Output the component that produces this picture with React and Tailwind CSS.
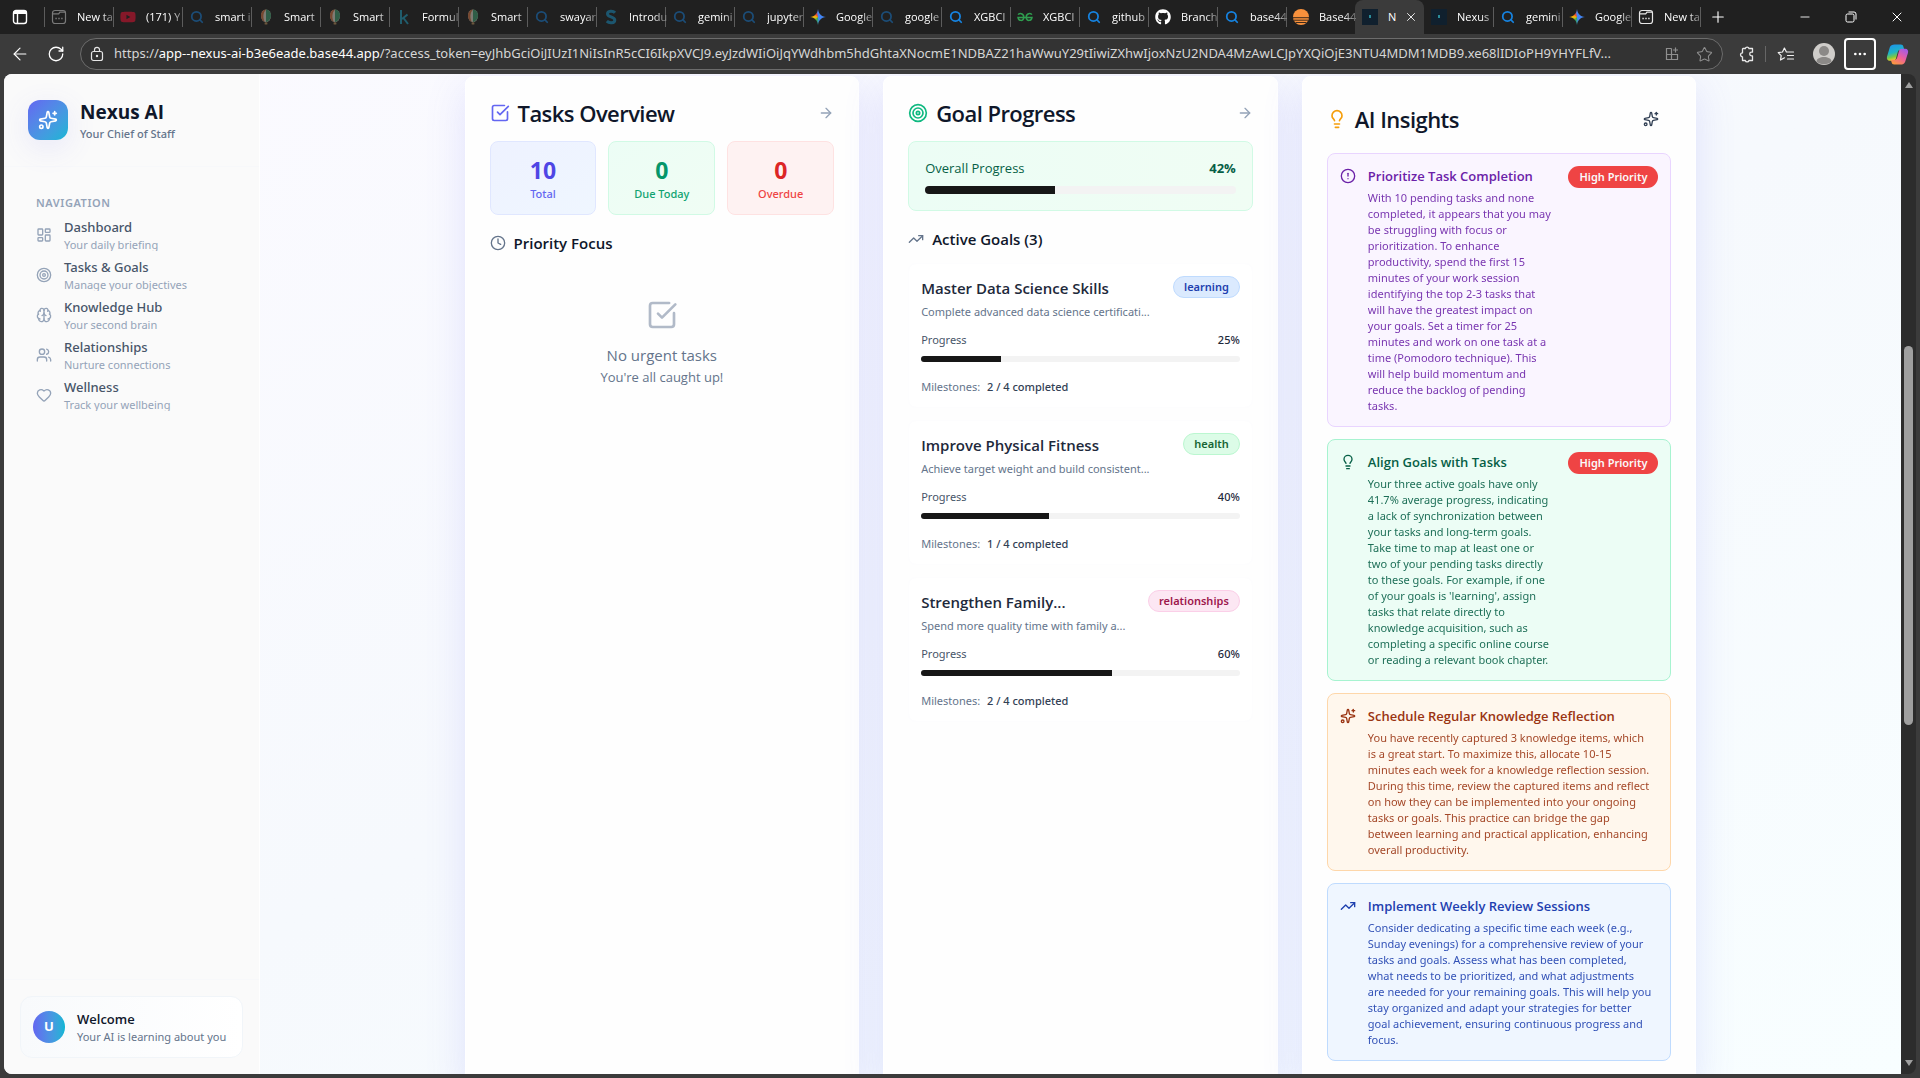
import React from "react";
import {
  ArrowLeft,
  ArrowRight,
  Brain,
  CircleAlert,
  Clock,
  Ellipsis,
  Heart,
  LayoutDashboard,
  Lightbulb,
  Minus,
  Plus,
  RotateCw,
  Search,
  Sparkles,
  SquareCheckBig,
  Star,
  Target,
  TrendingUp,
  Users,
  X,
} from "lucide-react";
import { FaGithub, FaYoutube } from "react-icons/fa";

/* Shared style of the small texts. */
const XS = "font-['Noto_Sans',sans-serif] text-[11px] ";

/* ---------- favicons ---------- */

const SearchIcon = () => <Search className="size-4 text-[#1683e0] p-px" strokeWidth={3} />;

const NewTabIcon = () => (
  <svg viewBox="0 0 16 16" className="size-4" fill="none" stroke="#e8e8e8" strokeWidth="1.2">
    <rect x="1.5" y="1.5" width="13" height="13" rx="2.5" />
    <path d="M1.5 4.8h6.2l1.2-1.6h5.4" />
    <path d="M4.4 9.5h1.4M7.3 9.5h1.4M10.2 9.5h1.4" strokeWidth="1.5" />
  </svg>
);

const BalloonIcon = () => (
  <svg viewBox="0 0 16 16" className="size-4">
    <ellipse cx="8" cy="6.8" rx="5" ry="6.3" fill="#f0e9d8" />
    <path d="M8 .5C5.200 .5 3 3.300 3 6.800c0 3 1.800 5.500 3.800 6.200C4.800 9 4.800 4 8 .5Z" fill="#e07a45" />
    <path d="M8 .5c2.800 0 5 2.800 5 6.300 0 3-2.200 5.500-5 6.300Z" fill="#43a877" />
    <rect x="6.600" y="13.300" width="2.800" height="2.200" rx=".6" fill="#c79a62" />
  </svg>
);

const KIcon = () => (
  <svg viewBox="0 0 16 16" className="size-4" fill="none" stroke="#20a5c9" strokeWidth="2">
    <path d="M5 1v14M11.500 5.500 6 10M7.500 9l4.500 6" />
  </svg>
);

const SIcon = () => (
  <svg viewBox="0 0 16 16" className="size-4" fill="none" stroke="#1899cf" strokeWidth="3">
    <path d="M12 3.800C10 1.500 4.500 1.600 4.500 4.900c0 3.400 7.300 2.400 7.300 6 0 3.500-5.600 3.600-8 1.300" />
  </svg>
);

const GeminiIcon = () => (
  <div className="size-4 bg-[conic-gradient(#4285f4_0deg_160deg,#34a853_200deg,#fbbc05_270deg,#ea4335_330deg,#4285f4_360deg)] [clip-path:path('M8_0C8.600_4.800_11.200_7.400_16_8C11.200_8.600_8.600_11.200_8_16C7.400_11.200_4.800_8.600_0_8C4.800_7.400_7.400_4.800_8_0Z')]" />
);

const GeeksIcon = () => (
  <svg viewBox="0 0 16 16" className="size-4" fill="none" stroke="#2f9e4f" strokeWidth="1.500">
    <path d="M1.200 5.800C2 4 6.800 4 6.800 8.200c0 4.400-5.400 4-5.800.2h14c-.4 3.800-5.800 4.200-5.800-.2C9.200 4 14 4 14.800 5.800" />
  </svg>
);

const BaseIcon = () => (
  <svg viewBox="0 0 16 16" className="size-4">
    <circle cx="8" cy="8" r="8" fill="#f9913c" />
    <path d="M0 8.700h16M1 11.200h14M2.500 13.500h11" stroke="#2a2018" strokeWidth=".9" />
  </svg>
);

const NexusIcon = () => (
  <svg viewBox="0 0 16 16" className="size-4">
    <rect width="16" height="16" fill="#10202e" />
    <path d="M7 6h2v3H7z" fill="#2b8c99" />
  </svg>
);

const YoutubeIcon = () => <FaYoutube className="size-4 text-[#ff1036]" />;
const GithubIcon = () => <FaGithub className="size-4 text-white" />;

const TABS = [
  [NewTabIcon, "New ta", true],
  [YoutubeIcon, "(171) Y", true],
  [SearchIcon, "smart i", true],
  [BalloonIcon, "Smart", true],
  [BalloonIcon, "Smart", true],
  [KIcon, "Formul", true],
  [BalloonIcon, "Smart", true],
  [SearchIcon, "swayar", true],
  [SIcon, "Introdu", true],
  [SearchIcon, "gemini", true],
  [SearchIcon, "jupyter", true],
  [GeminiIcon, "Google", false],
  [SearchIcon, "google", true],
  [SearchIcon, "XGBCl", false],
  [GeeksIcon, "XGBCl", false],
  [SearchIcon, "github", false],
  [GithubIcon, "Branch", false],
  [SearchIcon, "base44", false],
  [BaseIcon, "Base44", false],
  [NexusIcon, "N", false],
  [NexusIcon, "Nexus", false],
  [SearchIcon, "gemini", false],
  [GeminiIcon, "Google", false],
  [NewTabIcon, "New ta", false],
];
const ACTIVE_TAB = 19;

function Tab({ icon: Icon, title, dim, active, bordered }) {
  if (active) {
    return (
      <div className="flex h-full w-[69px] items-center rounded-t-lg bg-[#3b3b3b] pl-[7px]">
        <button className="flex items-center gap-[10px]" aria-label="Nexus AI tab">
          <Icon />
          <span>{title}</span>
        </button>
        <button className="ml-2" aria-label="Close tab">
          <X className="size-[14px]" strokeWidth={1.5} />
        </button>
      </div>
    );
  }
  return (
    <div className="flex h-full w-[69px] items-center">
      <div className={bordered ? "h-5 w-px bg-[#5c5c5c]" : "h-5 w-px"} />
      <button className="flex min-w-0 flex-1 items-center gap-[10px] pl-[6px]">
        <span className={dim ? "opacity-45" : ""}>
          <Icon />
        </span>
        <span className="whitespace-nowrap text-left [mask-image:linear-gradient(to_right,black_24px,transparent_42px)]">
          {title}
        </span>
      </button>
    </div>
  );
}

function TabStrip() {
  return (
    <div className="flex h-[34px] shrink-0 items-stretch bg-[#202020] font-['Open_Sans',sans-serif] text-[11px] text-white">
      <button className="flex w-[44px] items-center pl-3" aria-label="Tab actions">
        <svg viewBox="0 0 16 16" className="size-4" fill="none" stroke="white" strokeWidth="1.4">
          <rect x="1.500" y="1.500" width="13" height="13" rx="2.500" />
          <path d="M1.500 3.500h13" strokeWidth="3" />
          <path d="M5.500 3v11" />
        </svg>
      </button>
      {TABS.map(([icon, title, dim], i) => (
        <Tab
          key={i}
          icon={icon}
          title={title}
          dim={dim}
          active={i === ACTIVE_TAB}
          bordered={i !== ACTIVE_TAB + 1}
        />
      ))}
      <div className="my-auto h-5 w-px bg-[#5c5c5c]" />
      <button className="flex w-[34px] items-center justify-center" aria-label="New tab">
        <Plus className="size-[18px]" strokeWidth={1.5} />
      </button>
      <div className="ml-auto flex">
        <button className="flex w-[46px] items-center justify-center" aria-label="Minimize">
          <Minus className="size-[14px]" strokeWidth={1.5} />
        </button>
        <button className="flex w-[46px] items-center justify-center" aria-label="Restore">
          <svg viewBox="0 0 12 12" className="size-3" fill="none" stroke="white">
            <rect x="1" y="3" width="8" height="8" rx="1.500" />
            <path d="M3.500 1h5.500a2 2 0 0 1 2 2v5.500" />
          </svg>
        </button>
        <button className="flex w-[46px] items-center justify-center" aria-label="Close">
          <X className="size-[16px]" strokeWidth={1.5} />
        </button>
      </div>
    </div>
  );
}

const URL_TEXT =
  "/?access_token=eyJhbGciOiJIUzI1NiIsInR5cCI6IkpXVCJ9.eyJzdWIiOiJqYWdhbm5hdGhtaXNocmE1NDBAZ21haWwuY29tIiwiZXhwIjoxNzU2NDA4MzAwLCJpYXQiOjE3NTU4MDM1MDB9.xe68lIDIoPH9YHYFLfV...";

const CopilotIcon = () => (
  <svg viewBox="0 0 24 24" className="size-[23px]">
    <defs>
      <linearGradient id="cpA" x1="0" y1="0" x2="0.300" y2="1">
        <stop offset="0" stopColor="#1d8ff0" />
        <stop offset="0.550" stopColor="#1fb5c4" />
        <stop offset="0.800" stopColor="#7cc843" />
        <stop offset="1" stopColor="#f5d327" />
      </linearGradient>
      <linearGradient id="cpB" x1="0.800" y1="0" x2="0.200" y2="1">
        <stop offset="0" stopColor="#a05be8" />
        <stop offset="0.500" stopColor="#ee5f9c" />
        <stop offset="1" stopColor="#fb9a3a" />
      </linearGradient>
    </defs>
    <path d="M9 1.500h6.500c1.500 0 2.200.8 2.700 2.300L19 7h-3.500c-1.800 0-2.700.8-3.200 2.500L10.500 16c-.5 1.700-1.400 2.500-3 2.500H4c-2.500 0-3.600-2-2.900-4.500L4 4.500C4.700 2.500 6.500 1.500 9 1.500Z" fill="url(#cpA)" />
    <path d="M15 22.500H8.500c-1.500 0-2.200-.8-2.700-2.300L5 17.500h3.500c1.800 0 2.700-.8 3.200-2.500l1.800-6.500c.5-1.700 1.400-2.500 3-2.500H20c2.500 0 3.600 2 2.900 4.500L20 19.500c-.7 2-2.500 3-5 3Z" fill="url(#cpB)" />
  </svg>
);

function Toolbar() {
  return (
    <div className="flex h-10 shrink-0 items-center bg-[#3b3b3b] text-white">
      <button className="flex w-10 justify-center" aria-label="Back">
        <ArrowLeft className="size-5" strokeWidth={1.4} />
      </button>
      <button className="flex w-8 justify-center" aria-label="Reload">
        <RotateCw className="size-[18px]" strokeWidth={1.7} />
      </button>
      <div className="ml-2 flex h-8 min-w-0 flex-1 items-center rounded-full border border-[#6c6c6c] bg-[#333333] pr-[2px] pl-2">
        <svg viewBox="0 0 16 16" className="size-4 shrink-0" fill="none" stroke="#e5e5e5" strokeWidth="1.200">
          <rect x="2.500" y="5.500" width="11" height="9" rx="2" />
          <path d="M5.500 5.500V3.800a2.500 2.500 0 0 1 5 0v1.700" />
          <circle cx="8" cy="10" r=".6" fill="#e5e5e5" />
        </svg>
        <p className="ml-[9px] min-w-0 flex-1 whitespace-nowrap font-['Noto_Sans',sans-serif] text-[13px] text-[#d6d6d6]">
          https://<span className="text-white">app--nexus-ai-b3e6eade.base44.app</span>
          {URL_TEXT}
        </p>
        <button className="flex w-8 shrink-0 justify-center" aria-label="Install app">
          <svg viewBox="0 0 16 16" className="size-4" fill="none" stroke="#8f8f8f" strokeWidth="1.200">
            <path d="M7.500 2.500h-5v11h11v-5h-11M7.500 2.500v11M11.500 1.500v5M9 4h5" />
          </svg>
        </button>
        <button className="flex w-8 shrink-0 justify-center text-[#8f8f8f]" aria-label="Add to favorites">
          <Star className="size-[17px]" strokeWidth={1.5} />
        </button>
      </div>
      <button className="ml-[6px] flex w-9 justify-center" aria-label="Extensions">
        <svg viewBox="0 0 18 18" className="size-[18px]" fill="none" stroke="#e8e8e8" strokeWidth="1.300" strokeLinejoin="round">
          <path d="M5 3.500h2.300a1.900 1.900 0 0 1 3.700 0h3.500v3.700h-1a1.800 1.800 0 0 0 0 3.600h1v4.700h-3.500a1.900 1.900 0 0 1-3.700 0H4.500v-3.700a1.900 1.900 0 0 1 0-3.900V4Z" />
        </svg>
      </button>
      <div className="h-4 w-px bg-[#666666]" />
      <button className="flex w-10 justify-center" aria-label="Favorites">
        <svg viewBox="0 0 18 18" className="size-[18px]" fill="none" stroke="#f0f0f0" strokeWidth="1.200" strokeLinejoin="round" strokeLinecap="round">
          <path d="M7.500 12.800 3.500 15l.7-4.400-3-3 4.300-.6L7.400 3l2 4h7.100M10.500 10.500h6M10.500 14h6" />
        </svg>
      </button>
      <button className="mr-[2px] flex w-9 justify-center" aria-label="Profile">
        <svg viewBox="0 0 22 22" className="size-[22px]">
          <circle cx="11" cy="11" r="11" fill="#cfcdca" />
          <circle cx="11" cy="8" r="5" fill="#8b8987" />
          <path d="M3.500 18.500c0-6 15-6 15 0-3 3.600-12 3.600-15 0Z" fill="#8b8987" />
        </svg>
      </button>
      <button className="flex size-8 items-center justify-center rounded-sm border-2 border-white" aria-label="Settings and more">
        <Ellipsis className="size-4" strokeWidth={2} />
      </button>
      <button className="mr-[11px] ml-[9px] flex w-6 justify-center" aria-label="Copilot">
        <CopilotIcon />
      </button>
    </div>
  );
}

/* ---------- sidebar ---------- */

const NAV = [
  [LayoutDashboard, "Dashboard", "Your daily briefing"],
  [Target, "Tasks & Goals", "Manage your objectives"],
  [Brain, "Knowledge Hub", "Your second brain"],
  [Users, "Relationships", "Nurture connections"],
  [Heart, "Wellness", "Track your wellbeing"],
];

function Sidebar() {
  return (
    <aside className="flex w-64 shrink-0 flex-col border-r border-white bg-[#fafafa]">
      <header className="flex items-center gap-3 border-b border-[#f7f8fa] p-6">
        <div className="flex size-10 items-center justify-center rounded-xl bg-linear-to-br from-[#6366f1] to-[#06b6d4] shadow-[0_8px_30px_rgba(99,102,241,0.12)]">
          <Sparkles className="size-5 text-white" />
        </div>
        <div>
          <h1 className="text-[19px] leading-7 font-bold text-[#0f172a]">Nexus AI</h1>
          <p className={XS + "leading-4 font-medium text-[#64748b]"}>Your Chief of Staff</p>
        </div>
      </header>
      <nav className="flex-1 px-8 pt-6">
        <h2 className={XS + "mb-1 h-6 leading-6 font-semibold tracking-wider text-[#94a3b8]"}>NAVIGATION</h2>
        <ul className="flex flex-col gap-2">
          {NAV.map(([Icon, title, sub]) => (
            <li key={title}>
              <a href="#" className="flex h-8 items-center gap-3 overflow-hidden">
                <Icon className="size-4 shrink-0 text-[#94a3b8]" />
                <span className="flex flex-col">
                  <span className="font-['Noto_Sans',sans-serif] text-[13px] leading-5 font-medium text-[#475569]">{title}</span>
                  <span className={XS + "leading-4 text-[#94a3b8]"}>{sub}</span>
                </span>
              </a>
            </li>
          ))}
        </ul>
      </nav>
      <footer className="border-t border-[#f7f8fa] p-4">
        <div className="flex items-center gap-3 rounded-xl border border-[#f1f5f9] bg-linear-to-r from-[#f8fafc] to-white p-3">
          <div className="flex size-8 items-center justify-center rounded-full bg-linear-to-r from-[#6366f1] to-[#06b6d4] text-[13px] font-bold text-white">
            U
          </div>
          <div>
            <p className="text-[13px] leading-5 font-semibold text-[#0f172a]">Welcome</p>
            <p className={XS + "leading-4 text-[#64748b]"}>Your AI is learning about you</p>
          </div>
        </div>
      </footer>
    </aside>
  );
}

/* ---------- cards ---------- */

function Card({ children }) {
  return (
    <section className="rounded-lg border border-white bg-[#fefefe] p-6 shadow-[0_12px_40px_rgba(99,102,241,0.16)]">
      {children}
    </section>
  );
}

function CardHeader({ icon: Icon, iconClass, title }) {
  return (
    <div className="mb-4 flex h-6 items-center justify-between">
      <div className="flex items-center gap-2">
        <Icon className={iconClass} />
        <h2 className="text-[22px] leading-7 font-semibold tracking-tight text-[#0f172a]">{title}</h2>
      </div>
      <button aria-label={"Open " + title}>
        <ArrowRight className="size-4 text-[#94a3b8]" />
      </button>
    </div>
  );
}

const STATS = [
  ["10", "Total", "border-[#e0e7ff] bg-linear-to-br from-[#eef2ff] to-[#eff6ff] text-[#4f46e5]", "text-[#6366f1]"],
  ["0", "Due Today", "border-[#d1fae5] bg-linear-to-br from-[#ecfdf5] to-[#f0fdf4] text-[#059669]", "text-[#10a371]"],
  ["0", "Overdue", "border-[#fee2e2] bg-[#fef2f2] text-[#dc2626]", "text-[#ef4444]"],
];

function TasksCard() {
  return (
    <Card>
      <CardHeader icon={SquareCheckBig} iconClass="size-5 text-[#6366f1]" title="Tasks Overview" />
      <div className="grid grid-cols-3 gap-3">
        {STATS.map(([n, label, box, text]) => (
          <div key={label} className={"rounded-lg border p-3 text-center " + box}>
            <p className="text-[23px] leading-8 font-bold">{n}</p>
            <p className={XS + "leading-4 font-medium " + text}>{label}</p>
          </div>
        ))}
      </div>
      <h3 className="mt-4 flex items-center gap-2 text-[15px] leading-6 font-semibold text-[#0f172a]">
        <Clock className="size-4 text-[#64748b]" />
        Priority Focus
      </h3>
      <div className="flex flex-col items-center pt-11 text-[#64748b]">
        <SquareCheckBig className="mb-3 size-8 text-[#b1bac8]" />
        <p className="text-[15px] leading-6">No urgent tasks</p>
        <p className="text-[13px] leading-5">You're all caught up!</p>
      </div>
    </Card>
  );
}

const GOALS = [
  ["Master Data Science Skills", "learning", "border-[#bfdbfe] bg-[#dbeafe] text-[#1e40af]", "Complete advanced data science certificati...", 25, "2 / 4 completed"],
  ["Improve Physical Fitness", "health", "border-[#bbf7d0] bg-[#dcfce7] text-[#166534]", "Achieve target weight and build consistent...", 40, "1 / 4 completed"],
  ["Strengthen Family...", "relationships", "border-[#fbcfe8] bg-[#fce7f3] text-[#9d174d]", "Spend more quality time with family a...", 60, "2 / 4 completed"],
];

function Bar({ value, className }) {
  return (
    <div className={"overflow-hidden rounded-full bg-[#f3f3f3] " + className} role="progressbar" aria-valuenow={value}>
      <div className="h-full bg-[#171717]" style={{ width: value + "%" }} />
    </div>
  );
}

function GoalsCard() {
  return (
    <Card>
      <CardHeader icon={Target} iconClass="size-5 text-[#10b981]" title="Goal Progress" />
      <div className="rounded-lg border border-[#d1fae5] bg-linear-to-r from-[#ecfdf5] to-[#f0fdf4] p-4">
        <div className="mb-2 flex justify-between text-[13px] leading-5 text-[#065f46]">
          <span className="font-medium">Overall Progress</span>
          <span className="font-bold">42%</span>
        </div>
        <Bar value={41.7} className="h-2" />
      </div>
      <h3 className="mt-4 mb-3 flex items-center gap-2 text-[15px] leading-6 font-semibold text-[#0f172a]">
        <TrendingUp className="size-4 text-[#64748b]" />
        Active Goals (3)
      </h3>
      <div className="flex flex-col gap-3">
        {GOALS.map(([title, tag, tagClass, desc, pct, done]) => (
          <article key={title} className="rounded-lg border border-[#fdfdfe] bg-white p-3">
            <div className="flex items-start justify-between">
              <h4 className="text-[15px] leading-6 font-semibold text-[#1e293b]">{title}</h4>
              <span className={XS + "h-[22px] rounded-full border px-[10px] leading-5 font-semibold " + tagClass}>{tag}</span>
            </div>
            <p className={XS + "mt-1 leading-4 text-[#64748b]"}>{desc}</p>
            <div className={XS + "mt-3 mb-2 flex justify-between leading-4"}>
              <span className="text-[#475569]">Progress</span>
              <span className="font-medium text-[#1e293b]">{pct}%</span>
            </div>
            <Bar value={pct} className="h-[6px]" />
            <p className={XS + "border-t border-transparent pt-4 leading-4 text-[#64748b]"}>
              Milestones: <span className="ml-1 font-medium text-[#334155]">{done}</span>
            </p>
          </article>
        ))}
      </div>
    </Card>
  );
}

const INSIGHTS = [
  {
    icon: CircleAlert,
    title: "Prioritize Task Completion",
    tone: "border-[#e9d5ff] bg-[#faf5ff] text-[#6b21a8]",
    high: true,
    text: `With 10 pending tasks and none
completed, it appears that you may
be struggling with focus or
prioritization. To enhance
productivity, spend the first 15
minutes of your work session
identifying the top 2-3 tasks that
will have the greatest impact on
your goals. Set a timer for 25
minutes and work on one task at a
time (Pomodoro technique). This
will help build momentum and
reduce the backlog of pending
tasks.`,
  },
  {
    icon: Lightbulb,
    title: "Align Goals with Tasks",
    tone: "border-[#a7f3d0] bg-[#ecfdf5] text-[#065f46]",
    high: true,
    text: `Your three active goals have only
41.7% average progress, indicating
a lack of synchronization between
your tasks and long-term goals.
Take time to map at least one or
two of your pending tasks directly
to these goals. For example, if one
of your goals is 'learning', assign
tasks that relate directly to
knowledge acquisition, such as
completing a specific online course
or reading a relevant book chapter.`,
  },
  {
    icon: Sparkles,
    title: "Schedule Regular Knowledge Reflection",
    tone: "border-[#fed7aa] bg-[#fff7ed] text-[#9a3412]",
    text: `You have recently captured 3 knowledge items, which
is a great start. To maximize this, allocate 10-15
minutes each week for a knowledge reflection session.
During this time, review the captured items and reflect
on how they can be implemented into your ongoing
tasks or goals. This practice can bridge the gap
between learning and practical application, enhancing
overall productivity.`,
  },
  {
    icon: TrendingUp,
    title: "Implement Weekly Review Sessions",
    tone: "border-[#bfdbfe] bg-[#eff6ff] text-[#1e40af]",
    text: `Consider dedicating a specific time each week (e.g.,
Sunday evenings) for a comprehensive review of your
tasks and goals. Assess what has been completed,
what needs to be prioritized, and what adjustments
are needed for your remaining goals. This will help you
stay organized and adapt your strategies for better
goal achievement, ensuring continuous progress and
focus.`,
  },
];

function InsightsCard() {
  return (
    <Card>
      <div className="mb-4 flex h-9 items-center justify-between">
        <div className="flex items-center gap-2">
          <Lightbulb className="size-5 text-[#f59e0b]" />
          <h2 className="text-[22px] leading-7 font-semibold tracking-tight text-[#0f172a]">AI Insights</h2>
        </div>
        <button className="px-3" aria-label="Generate insights">
          <Sparkles className="size-4 text-[#334155]" />
        </button>
      </div>
      <div className="flex flex-col gap-3">
        {INSIGHTS.map(({ icon: Icon, title, tone, high, text }) => (
          <article key={title} className={"flex gap-3 rounded-lg border p-3 " + tone}>
            <Icon className="mt-[2px] size-4 shrink-0" />
            <div className="min-w-0 flex-1">
              <h3 className="text-[13px] leading-5 font-semibold whitespace-nowrap">{title}</h3>
              <p className={XS + "mt-1 leading-4 whitespace-pre opacity-90"}>{text}</p>
            </div>
            {high && (
              <span className={XS + "-ml-1 h-[22px] shrink-0 rounded-full bg-[#ef4444] px-[11px] leading-[22px] font-semibold text-[#fafafa]"}>
                High Priority
              </span>
            )}
          </article>
        ))}
      </div>
    </Card>
  );
}

function Scrollbar() {
  return (
    <div className="flex w-[15px] shrink-0 flex-col items-center rounded-r-lg bg-[#2c2c2c] py-2">
      <svg viewBox="0 0 8 6" className="h-[6px] w-2" fill="#9f9f9f"><path d="M4 0 8 6H0Z" /></svg>
      <div className="flex w-full flex-1 flex-col items-center">
        <div className="h-[26.5%]" />
        <div className="h-[39%] w-[9px] rounded-full bg-[#9f9f9f]" />
      </div>
      <svg viewBox="0 0 8 6" className="h-[6px] w-2" fill="#9f9f9f"><path d="M4 6 8 0H0Z" /></svg>
    </div>
  );
}

export default function App() {
  return (
    <div className="flex h-screen flex-col overflow-hidden bg-[#3b3b3b] font-['Open_Sans','Noto_Sans',sans-serif]">
      <TabStrip />
      <Toolbar />
      <div className="flex min-h-0 flex-1 px-1 pb-1">
        <div className="flex min-w-0 flex-1 overflow-hidden rounded-l-lg bg-linear-to-br from-[#fbfaff] via-[#f6f9fd] to-[#f8feff]">
          <Sidebar />
          <main className="min-w-0 flex-1 overflow-hidden px-6 pt-[2px]">
            <div className="mx-auto grid max-w-[1232px] grid-cols-3 gap-6">
              <TasksCard />
              <GoalsCard />
              <InsightsCard />
            </div>
          </main>
        </div>
        <Scrollbar />
      </div>
    </div>
  );
}
